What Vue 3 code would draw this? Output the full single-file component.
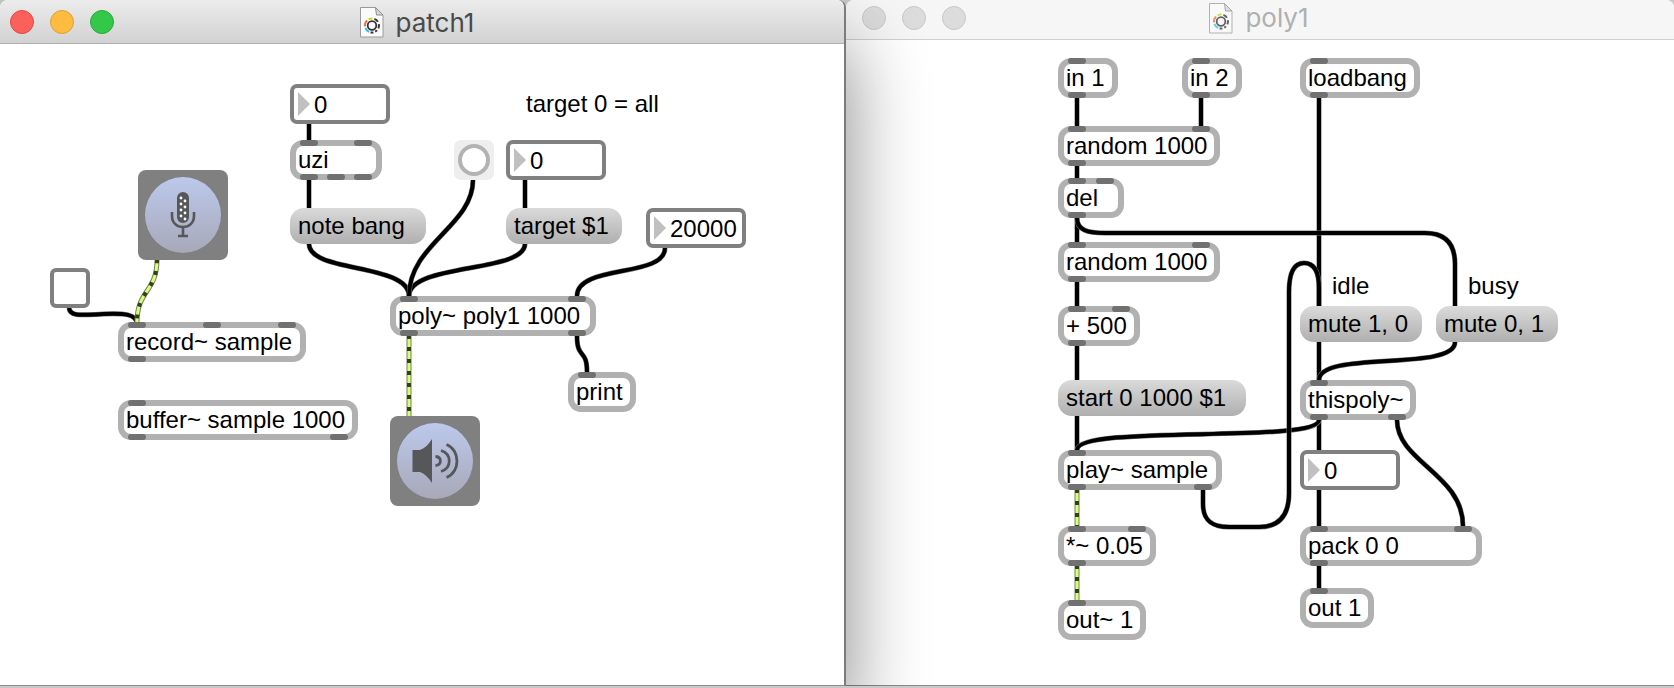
<script setup>
import { reactive } from 'vue'

// Inlets and outlets are given as distances from the left edge of their box.
const patches = reactive([
  {
    id: 'patch1',
    active: true,
    origin: { x: 0, y: 44 },
    nodes: [
      { kind: 'number', x: 290, y: 84, w: 100, value: '0', label: 'uzi count' },
      { kind: 'comment', x: 526, y: 84, text: 'target 0 = all' },
      { kind: 'object', x: 290, y: 140, w: 92, text: 'uzi', ins: [10, 64], outs: [10, 37, 64] },
      { kind: 'bang', x: 454, y: 140 },
      { kind: 'number', x: 506, y: 140, w: 100, value: '0', label: 'target voice' },
      { kind: 'message', x: 290, y: 208, w: 136, text: 'note bang' },
      { kind: 'message', x: 506, y: 208, w: 116, text: 'target $1' },
      { kind: 'number', x: 646, y: 208, w: 100, value: '20000', label: 'poly right inlet' },
      { kind: 'mic', x: 138, y: 170 },
      { kind: 'toggle', x: 50, y: 268 },
      { kind: 'object', x: 390, y: 296, w: 206, text: 'poly~ poly1 1000', ins: [10, 178], outs: [10, 178] },
      { kind: 'object', x: 118, y: 322, w: 188, text: 'record~ sample', ins: [10, 85, 160], outs: [10] },
      { kind: 'object', x: 568, y: 372, w: 68, text: 'print', ins: [10], outs: [] },
      { kind: 'object', x: 118, y: 400, w: 240, text: 'buffer~ sample 1000', ins: [10], outs: [10, 212] },
      { kind: 'speaker', x: 390, y: 416 }
    ],
    cords: [
      'M309 124V140',
      'M309 180V208',
      'M525 180V208',
      'M309 244C309 273 409 263 409 296',
      'M525 244C525 273 409 263 409 296',
      'M473 180C473 226 409 244 409 296',
      'M665 248C665 278 577 264 577 296',
      'M577 336C577 360 587 348 587 372',
      'M69 308C70 317 82 315 103 314S137 314 137 324'
    ],
    signals: ['M409 336V416', 'M157 260C157 292 137 290 137 322']
  },
  {
    id: 'poly1',
    active: false,
    origin: { x: 846, y: 40 },
    nodes: [
      { kind: 'object', x: 1058, y: 58, w: 60, text: 'in 1', ins: [10], outs: [10] },
      { kind: 'object', x: 1182, y: 58, w: 60, text: 'in 2', ins: [10], outs: [10] },
      { kind: 'object', x: 1300, y: 58, w: 120, text: 'loadbang', ins: [10], outs: [10] },
      { kind: 'object', x: 1058, y: 126, w: 162, text: 'random 1000', ins: [10, 134], outs: [10] },
      { kind: 'object', x: 1058, y: 178, w: 66, text: 'del', ins: [10, 38], outs: [10] },
      { kind: 'object', x: 1058, y: 242, w: 162, text: 'random 1000', ins: [10, 134], outs: [10] },
      { kind: 'comment', x: 1332, y: 266, text: 'idle' },
      { kind: 'comment', x: 1468, y: 266, text: 'busy' },
      { kind: 'object', x: 1058, y: 306, w: 82, text: '+ 500', ins: [10, 54], outs: [10] },
      { kind: 'message', x: 1300, y: 306, w: 122, text: 'mute 1, 0' },
      { kind: 'message', x: 1436, y: 306, w: 122, text: 'mute 0, 1' },
      { kind: 'message', x: 1058, y: 380, w: 188, text: 'start 0 1000 $1' },
      { kind: 'object', x: 1300, y: 380, w: 116, text: 'thispoly~', ins: [10], outs: [10, 88] },
      { kind: 'object', x: 1058, y: 450, w: 164, text: 'play~ sample', ins: [10], outs: [10, 136] },
      { kind: 'number', x: 1300, y: 450, w: 100, value: '0', label: 'instance number' },
      { kind: 'object', x: 1058, y: 526, w: 98, text: '*~ 0.05', ins: [10, 70], outs: [10] },
      { kind: 'object', x: 1300, y: 526, w: 182, text: 'pack 0 0', ins: [10, 154], outs: [10] },
      { kind: 'object', x: 1300, y: 588, w: 74, text: 'out 1', ins: [10], outs: [] },
      { kind: 'object', x: 1058, y: 600, w: 88, text: 'out~ 1', ins: [10], outs: [] }
    ],
    cords: [
      'M1077 98V126',
      'M1201 98V126',
      'M1077 166V178',
      'M1077 218V242',
      'M1077 282V306',
      'M1077 346V380',
      'M1077 416V450',
      'M1319 98V306',
      'M1319 342V380',
      'M1319 420V450',
      'M1319 490V526',
      'M1319 566V588',
      'M1077 218C1077 230 1087 233 1105 233H1425C1445 233 1455 243 1455 264V306',
      'M1455 342C1455 372 1319 350 1319 380',
      'M1319 420C1319 444 1077 424 1077 450',
      'M1397 420C1397 462 1463 474 1463 526',
      'M1203 490V504C1203 519 1210 527 1229 527H1259C1279 527 1289 516 1289 493V292C1289 272 1294 263 1304 263S1319 272 1319 288V306'
    ],
    signals: ['M1077 490V526', 'M1077 566V600']
  }
])

const micHoles = [
  [36, 22], [40, 25], [36, 28], [40, 31], [36, 34], [40, 37], [36, 40], [40, 43]
]

function place(patch, node) {
  return {
    left: node.x - patch.origin.x + 'px',
    top: node.y - patch.origin.y + 'px',
    width: node.w ? node.w + 'px' : undefined
  }
}
</script>

<template>
  <main class="desktop">
    <section
      v-for="patch in patches"
      :key="patch.id"
      class="window"
      :class="patch.active ? 'active' : 'inactive'"
    >
      <header class="titlebar">
        <div class="lights">
          <button type="button" class="light close" aria-label="Close"></button>
          <button type="button" class="light minimize" aria-label="Minimize"></button>
          <button type="button" class="light zoom" aria-label="Zoom"></button>
        </div>
        <div class="title">
          <svg class="doc" width="24" height="31" viewBox="0 0 24 31" aria-hidden="true">
            <path d="M.5 .5H15.500L23 8V30H.5Z" fill="#fafafa" stroke="#9a9a9a" />
            <path d="M15.500 .5L23 8H16.500Z" fill="#d8d8d8" stroke="#8c8c8c" stroke-linejoin="round" />
            <g fill="none" transform="translate(12 18.500)">
              <circle r="4.300" stroke="#333" stroke-width="1.800" />
              <g stroke-width="2">
                <path d="M-3.500 -6.100A7 7 0 0 1 .5 -7" stroke="#c8d82c" />
                <path d="M-7 .8A7 7 0 0 1 -4.900 -5" stroke="#f0703a" />
                <path d="M-2.800 6.400A7 7 0 0 1 -6.600 2.400" stroke="#35b8ee" />
                <path d="M2.400 -6.600A7 7 0 0 1 5.900 -3.800" stroke="#333" />
                <path d="M6.900 -1.400A7 7 0 0 1 6.400 2.800" stroke="#333" />
                <path d="M5 4.900A7 7 0 0 1 3.200 6.200" stroke="#333" />
                <path d="M1.400 6.900A7 7 0 0 1 -1.400 6.900" stroke="#333" />
              </g>
            </g>
          </svg>
          <h1>{{ patch.id }}</h1>
        </div>
      </header>

      <div class="canvas">
        <svg class="cords" aria-hidden="true">
          <g :transform="`translate(${-patch.origin.x} ${-patch.origin.y})`">
            <g v-for="d in patch.cords" :key="d">
              <path class="cord-edge" :d="d" />
              <path class="cord" :d="d" />
            </g>
            <g v-for="d in patch.signals" :key="d">
              <path class="signal-edge" :d="d" />
              <path class="signal" :d="d" />
              <path class="signal-dash" :d="d" />
            </g>
          </g>
        </svg>

        <template v-for="(node, i) in patch.nodes" :key="i">
          <div v-if="node.kind === 'object'" class="node object" :style="place(patch, node)">
            {{ node.text }}
            <i v-for="p in node.ins" :key="'i' + p" class="port inlet" :style="{ left: p + 'px' }"></i>
            <i v-for="p in node.outs" :key="'o' + p" class="port outlet" :style="{ left: p + 'px' }"></i>
          </div>

          <button v-else-if="node.kind === 'message'" type="button" class="node message" :style="place(patch, node)">
            {{ node.text }}
          </button>

          <label v-else-if="node.kind === 'number'" class="node number" :style="place(patch, node)">
            <svg width="12" height="24" viewBox="0 0 12 24" aria-hidden="true">
              <path d="M0 0L12 12L0 24Z" fill="#c0c0c0" />
            </svg>
            <input v-model="node.value" type="text" inputmode="numeric" :aria-label="node.label" />
          </label>

          <p v-else-if="node.kind === 'comment'" class="node comment" :style="place(patch, node)">{{ node.text }}</p>

          <input
            v-else-if="node.kind === 'toggle'"
            type="checkbox"
            class="node toggle"
            aria-label="Record on or off"
            :style="place(patch, node)"
          />

          <button
            v-else-if="node.kind === 'bang'"
            type="button"
            class="node bang"
            aria-label="Bang"
            :style="place(patch, node)"
          ></button>

          <button
            v-else
            type="button"
            class="node audio"
            :aria-label="node.kind === 'mic' ? 'Audio input' : 'Audio output'"
            :style="place(patch, node)"
          >
            <span class="disc">
              <svg v-if="node.kind === 'mic'" width="76" height="76" viewBox="0 0 76 76" aria-hidden="true">
                <rect x="32" y="15" width="12" height="31" rx="6" fill="#555759" />
                <path
                  d="M27 35V39C27 46 32 50 38 50S49 46 49 39V35M38 50V59M33 59H43"
                  fill="none"
                  stroke="#555759"
                  stroke-width="2.600"
                />
                <circle v-for="(h, n) in micHoles" :key="n" :cx="h[0]" :cy="h[1] - 1" r="1.400" fill="#fff" />
              </svg>
              <svg v-else width="76" height="76" viewBox="0 0 76 76" aria-hidden="true">
                <path d="M15.500 27H23C28 25 32 21 35 16V60C32 55 28 51 23 49H15.500Z" fill="#555759" />
                <g fill="none" stroke="#555759" stroke-width="2.800">
                  <path d="M38.500 33.500C45 34 45 42 38.500 42.500" />
                  <path d="M44 27.500C55 31 55 45 44 48.500" />
                  <path d="M49.500 21.500C63.500 27 63.500 49 49.500 54.500" />
                </g>
              </svg>
            </span>
          </button>
        </template>
      </div>
    </section>
  </main>
</template>

<style>
body {
  background: #c9c9c9;
}
</style>

<style scoped>
.desktop {
  display: grid;
  grid-template-columns: 846fr 828fr;
  box-sizing: border-box;
  min-height: 100vh;
  padding-bottom: 2px;
  overflow: hidden;
  font-family: 'Liberation Sans', Arial, sans-serif;
  font-size: 24px;
  line-height: 26px;
  color: #000;
}

.window {
  display: flex;
  flex-direction: column;
  position: relative;
  box-sizing: border-box;
  min-width: 0;
  background: #fff;
  border-bottom: 1px solid #8c8c8c;
  border-radius: 8px 8px 0 0;
}

.window.active {
  z-index: 1;
  border-right: 2px solid #7b7b7b;
  box-shadow: 0 44px 80px rgba(0, 0, 0, 0.48);
  clip-path: inset(0 -160px 0 0);
}

.titlebar {
  display: grid;
  grid-template-columns: 1fr auto 1fr;
  align-items: center;
  box-sizing: border-box;
  height: 44px;
  padding: 0 20px 0 10px;
  background: linear-gradient(#ececec, #d2d2d2);
  border-bottom: 1px solid #b0b0b0;
  border-radius: 8px 8px 0 0;
}

.inactive .titlebar {
  height: 40px;
  padding: 0 18px 3px 16px;
  background: #f6f6f6;
  border-bottom-color: #cfcfcf;
}

.lights {
  display: flex;
  gap: 16px;
}

.light {
  box-sizing: border-box;
  width: 24px;
  height: 24px;
  padding: 0;
  border: 1px solid;
  border-radius: 50%;
}

.close {
  background: #fc605c;
  border-color: #df4744;
}

.minimize {
  background: #fdbc40;
  border-color: #dd9f34;
}

.zoom {
  background: #34c84a;
  border-color: #27aa35;
}

.inactive .light {
  background: #dcdcdc;
  border-color: #c8c8c8;
}

.title {
  display: flex;
  align-items: center;
  gap: 12px;
}

.active .title {
  padding-top: 2px;
}

.title h1 {
  margin: 0;
  font: 400 26px/30px Inter, sans-serif;
  color: #4a4a4a;
}

.inactive .title h1 {
  color: #b0b0b0;
}

.inactive .doc {
  opacity: 0.75;
}

.canvas {
  position: relative;
  flex: 1;
}

.cords {
  position: absolute;
  inset: 0;
  width: 100%;
  height: 100%;
}

.cords path {
  fill: none;
}

.cord-edge {
  stroke: #777;
  stroke-width: 5;
}

.cord {
  stroke: #000;
  stroke-width: 4;
}

.signal-edge {
  stroke: #78825a;
  stroke-width: 5;
}

.signal {
  stroke: #d5ff7b;
  stroke-width: 3;
}

.signal-dash {
  stroke: #363d20;
  stroke-width: 4;
  stroke-dasharray: 4 8;
  stroke-dashoffset: 1;
}

.node {
  position: absolute;
  box-sizing: border-box;
  margin: 0;
  font: inherit;
  color: inherit;
  text-align: left;
  white-space: nowrap;
}

.object {
  height: 40px;
  padding: 7px 8px;
  background: #fff;
  border-radius: 13px;
  box-shadow: inset 0 0 0 6px #b1b1b1;
}

.port {
  position: absolute;
  width: 18px;
  height: 6px;
  background: #717171;
  border-radius: 3px;
}

.inlet {
  top: 0;
}

.outlet {
  bottom: 0;
}

.message {
  height: 36px;
  padding: 5px 8px;
  border: 0;
  border-radius: 14px;
  background: linear-gradient(#dadada, #afafaf);
}

.number {
  display: flex;
  align-items: center;
  gap: 4px;
  height: 40px;
  padding: 0 0 0 4px;
  background: #fff;
  border: 4px solid #808080;
  border-radius: 7px;
}

.number svg {
  flex: none;
}

.number input {
  flex: 1;
  min-width: 0;
  height: 28px;
  padding: 1px 0 0;
  border: 0;
  outline: 0;
  background: transparent;
  font: inherit;
  color: inherit;
}

.comment {
  padding-top: 7px;
}

.toggle {
  width: 40px;
  height: 40px;
  appearance: none;
  background: #fff;
  border: 4px solid #808080;
  border-radius: 6px;
}

.bang {
  display: grid;
  place-items: center;
  width: 40px;
  height: 40px;
  padding: 0;
  background: #eee;
  border: 0;
  border-radius: 7px;
}

.bang::before {
  content: '';
  box-sizing: border-box;
  width: 32px;
  height: 32px;
  background: #fff;
  border: 4px solid #b3b3b3;
  border-radius: 50%;
}

.audio {
  display: grid;
  place-items: center;
  width: 90px;
  height: 90px;
  padding: 0;
  background: #808080;
  border: 0;
  border-radius: 8px;
}

.disc {
  display: flex;
  width: 76px;
  height: 76px;
  border-radius: 50%;
  background: linear-gradient(#bcc9ec, #a8a8b8);
}
</style>
